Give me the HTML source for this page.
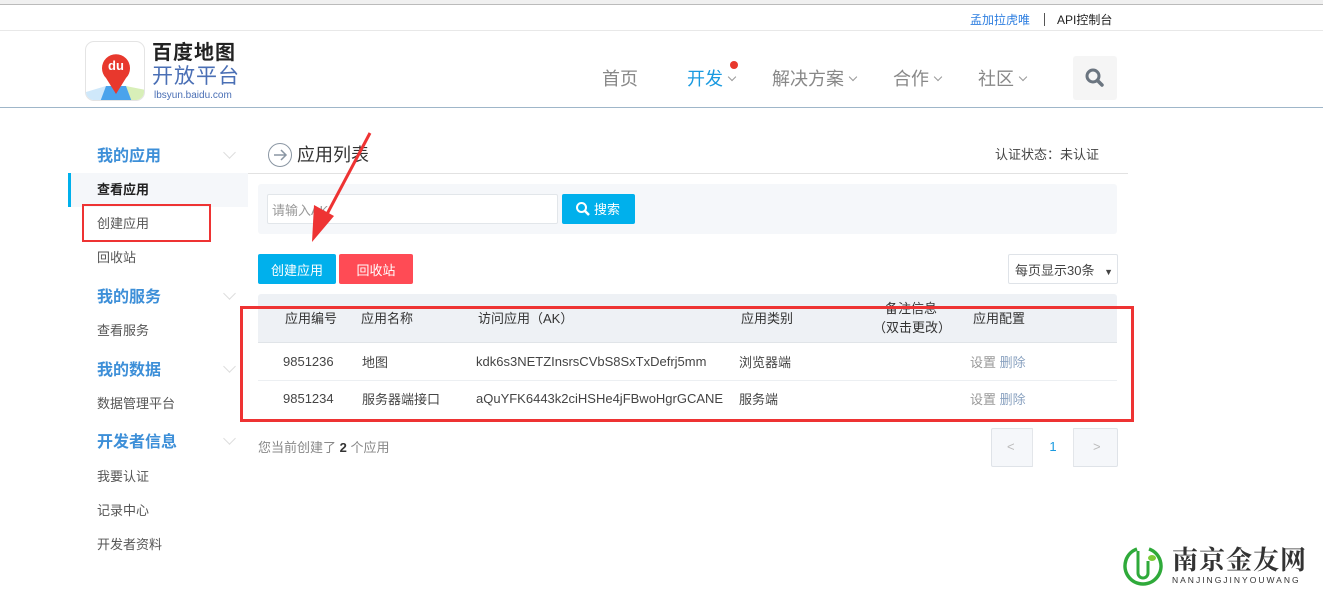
<!DOCTYPE html>
<html><head><meta charset="utf-8"><style>
*{margin:0;padding:0;box-sizing:border-box}
body{width:1323px;height:595px;overflow:hidden;background:#fff;font-family:"Liberation Sans","Noto Sans CJK SC",sans-serif;color:#333;position:relative;font-size:13px}
.a{position:absolute;white-space:nowrap}
.side{font-size:13px;color:#333}
.sh{font-size:16px;color:#3d8fd8;font-weight:bold}
.chev{position:absolute;width:9px;height:9px;border-right:1px solid #ddd;border-bottom:1px solid #ddd;transform:rotate(45deg)}
.nav{font-size:18px;color:#888;top:65px}
.dn{display:inline-block;width:6px;height:6px;border-right:1px solid #999;border-bottom:1px solid #999;transform:rotate(45deg);margin-left:6px;vertical-align:5px}
.th{font-size:13px;color:#333}
.td{font-size:13px;color:#444}
</style></head><body>
<div class="a" style="left:0;top:0;width:1323px;height:5px;background:#f0f0f0;border-bottom:1px solid #bbb"></div>
<div class="a" style="left:970px;top:11px;font-size:12px;color:#2f7fe0">孟加拉虎唯</div>
<div class="a" style="left:1044px;top:13px;width:1px;height:13px;background:#555"></div>
<div class="a" style="left:1057px;top:11px;font-size:12px;color:#222">API控制台</div>
<div class="a" style="left:0;top:30px;width:1323px;height:1px;background:#e8e8e8"></div>
<!-- logo -->
<div class="a" style="left:85px;top:41px;width:60px;height:60px;border:1px solid #e4e4e4;border-radius:9px;overflow:hidden;background:#fff">
<svg width="60" height="60" viewBox="0 0 60 60"><polygon points="0,50 20,44 14,60 0,60" fill="#cfe8fa"/><polygon points="40,44 60,48 60,60 46,60" fill="#d8efb8"/><polygon points="20,44 40,44 46,60 14,60" fill="#4aa3ec"/><path d="M30 52 L20 36 A14 14 0 1 1 40 36 Z" fill="#e8382d"/><text x="30" y="28" font-size="13" fill="#fff" text-anchor="middle" font-family="Liberation Sans" font-weight="bold">du</text></svg></div>
<div class="a" style="left:152px;top:43px;font-size:20px;line-height:20px;font-weight:bold;color:#222;letter-spacing:1px">百度地图</div>
<div class="a" style="left:152px;top:66px;font-size:21px;line-height:22px;color:#4a6fb5;letter-spacing:1px">开放平台</div>
<div class="a" style="left:154px;top:90px;font-size:10px;line-height:11px;color:#4a6fb5">lbsyun.baidu.com</div>
<div class="a nav" style="left:602px">首页</div>
<div class="a nav" style="left:687px;color:#1a9ae0">开发<span class="dn"></span></div>
<div class="a" style="left:730px;top:61px;width:8px;height:8px;border-radius:50%;background:#e8382d"></div>
<div class="a nav" style="left:772px">解决方案<span class="dn"></span></div>
<div class="a nav" style="left:893px">合作<span class="dn"></span></div>
<div class="a nav" style="left:978px">社区<span class="dn"></span></div>
<div class="a" style="left:1073px;top:56px;width:44px;height:44px;background:#f5f5f5;border-radius:3px">
<svg width="44" height="44"><circle cx="20" cy="20" r="6" fill="none" stroke="#6b7580" stroke-width="3"/><line x1="24.5" y1="24.5" x2="29" y2="29" stroke="#6b7580" stroke-width="3.5" stroke-linecap="round"/></svg></div>
<div class="a" style="left:0;top:107px;width:1323px;height:1px;background:#9fb6c9"></div>
<!-- sidebar -->
<div class="a sh" style="left:97px;top:142px">我的应用</div><div class="chev" style="left:225px;top:148px"></div>
<div class="a" style="left:68px;top:173px;width:180px;height:34px;background:#f5f7fa;border-left:3px solid #00b0ec"></div>
<div class="a side" style="left:97px;top:179px;font-weight:bold;color:#222">查看应用</div>
<div class="a side" style="left:97px;top:213px;color:#555">创建应用</div>
<div class="a" style="left:82px;top:204px;width:129px;height:38px;border:2px solid #ee3333"></div>
<div class="a side" style="left:97px;top:247px;color:#555">回收站</div>
<div class="a sh" style="left:97px;top:283px">我的服务</div><div class="chev" style="left:225px;top:289px"></div>
<div class="a side" style="left:97px;top:320px;color:#555">查看服务</div>
<div class="a sh" style="left:97px;top:356px">我的数据</div><div class="chev" style="left:225px;top:362px"></div>
<div class="a side" style="left:97px;top:393px;color:#555">数据管理平台</div>
<div class="a sh" style="left:97px;top:428px">开发者信息</div><div class="chev" style="left:225px;top:434px"></div>
<div class="a side" style="left:97px;top:466px;color:#555">我要认证</div>
<div class="a side" style="left:97px;top:500px;color:#555">记录中心</div>
<div class="a side" style="left:97px;top:534px;color:#555">开发者资料</div>
<!-- main -->
<div class="a" style="left:268px;top:143px;width:24px;height:24px;border:1.5px solid #8a96a3;border-radius:50%"><svg width="22" height="22" style="position:absolute;left:0;top:0"><path d="M5 11 H17 M12 6 L17 11 L12 16" fill="none" stroke="#8a96a3" stroke-width="1.5"/></svg></div>
<div class="a" style="left:297px;top:141px;font-size:18px;color:#333">应用列表</div>
<div class="a" style="left:995px;top:144px;font-size:13px;color:#444">认证状态：未认证</div>
<div class="a" style="left:248px;top:173px;width:880px;height:1px;background:#e2e2e2"></div>
<div class="a" style="left:258px;top:184px;width:859px;height:50px;background:#f5f7fa;border-radius:3px"></div>
<div class="a" style="left:267px;top:194px;width:291px;height:30px;background:#fff;border:1px solid #e2e6ea;border-radius:2px;padding:5px 4px;font-size:13px;color:#999">请输入AK</div>
<div class="a" style="left:562px;top:194px;width:73px;height:30px;background:#00b0ec;border-radius:2px;color:#fff;font-size:13px;padding:5px 0 0 32px"><svg width="16" height="16" style="position:absolute;left:13px;top:7px"><circle cx="6.5" cy="6.5" r="4.5" fill="none" stroke="#fff" stroke-width="2"/><line x1="10" y1="10" x2="14" y2="14" stroke="#fff" stroke-width="2.5"/></svg>搜索</div>
<div class="a" style="left:258px;top:254px;width:78px;height:30px;background:#00b0ec;border-radius:2px;color:#fff;padding-top:6px;text-align:center">创建应用</div>
<div class="a" style="left:339px;top:254px;width:74px;height:30px;background:#ff4b55;border-radius:2px;color:#fff;padding-top:6px;text-align:center">回收站</div>
<div class="a" style="left:1008px;top:254px;width:110px;height:30px;border:1px solid #dfe3e8;border-radius:2px;padding:5px 0 0 6px;color:#444">每页显示30条 <span style="font-size:9px;margin-left:6px">▼</span></div>
<div class="a" style="left:258px;top:294px;width:859px;height:49px;background:#eef1f5;border-bottom:1px solid #e0e4e8;border-radius:3px 3px 0 0"></div>
<div class="a th" style="left:285px;top:308px">应用编号</div>
<div class="a th" style="left:361px;top:308px">应用名称</div>
<div class="a th" style="left:478px;top:308px">访问应用（AK）</div>
<div class="a th" style="left:741px;top:308px">应用类别</div>
<div class="a th" style="left:885px;top:298px">备注信息</div>
<div class="a th" style="left:873px;top:317px">（双击更改）</div>
<div class="a th" style="left:973px;top:308px">应用配置</div>
<div class="a td" style="left:283px;top:354px">9851236</div>
<div class="a td" style="left:362px;top:352px">地图</div>
<div class="a td" style="left:476px;top:354px">kdk6s3NETZInsrsCVbS8SxTxDefrj5mm</div>
<div class="a td" style="left:739px;top:352px">浏览器端</div>
<div class="a td" style="left:970px;top:352px;color:#999">设置 <span style="color:#8aa2c0">删除</span></div>
<div class="a" style="left:258px;top:380px;width:859px;height:1px;background:#eceff2"></div>
<div class="a td" style="left:283px;top:391px">9851234</div>
<div class="a td" style="left:362px;top:389px">服务器端接口</div>
<div class="a td" style="left:476px;top:391px">aQuYFK6443k2ciHSHe4jFBwoHgrGCANE</div>
<div class="a td" style="left:739px;top:389px">服务端</div>
<div class="a td" style="left:970px;top:389px;color:#999">设置 <span style="color:#8aa2c0">删除</span></div>
<div class="a" style="left:240px;top:306px;width:894px;height:116px;border:3px solid #ee3333"></div>
<div class="a" style="left:258px;top:437px;color:#888">您当前创建了 <b style="color:#333">2</b> 个应用</div>
<div class="a" style="left:991px;top:428px;width:127px;height:39px;border:1px solid #dfe3e8;background:#f5f7fa;border-radius:2px"></div>
<div class="a" style="left:1032px;top:428px;width:42px;height:39px;background:#fff;border-left:1px solid #e3e6ea;border-right:1px solid #e3e6ea;color:#1a9ae0;text-align:center;padding-top:11px">1</div>
<div class="a" style="left:1007px;top:439px;color:#bbb">&lt;</div>
<div class="a" style="left:1093px;top:439px;color:#bbb">&gt;</div>
<!-- arrow -->
<svg class="a" style="left:0;top:0" width="1323" height="595"><line x1="370" y1="133" x2="326" y2="216" stroke="#ee3333" stroke-width="3"/><polygon points="312,242 314,205 334,216" fill="#ee3333"/></svg>
<!-- watermark -->
<svg class="a" style="left:1121px;top:543px" width="44" height="44"><path d="M16 6 A18 18 0 1 0 28 6" fill="none" stroke="#2faa3a" stroke-width="3.5"/><path d="M17 8 V30 A5 5 0 0 0 27 30 V18" fill="none" stroke="#2faa3a" stroke-width="3"/><ellipse cx="31" cy="15" rx="4" ry="3" fill="#7ccc3a"/></svg>
<div class="a" style="left:1172px;top:540px;font-size:26px;font-weight:bold;color:#333;font-family:'Noto Serif CJK SC',serif;letter-spacing:1px">南京金友网</div>
<div class="a" style="left:1172px;top:575px;font-size:8.5px;color:#333;letter-spacing:2px">NANJINGJINYOUWANG</div>
</body></html>
